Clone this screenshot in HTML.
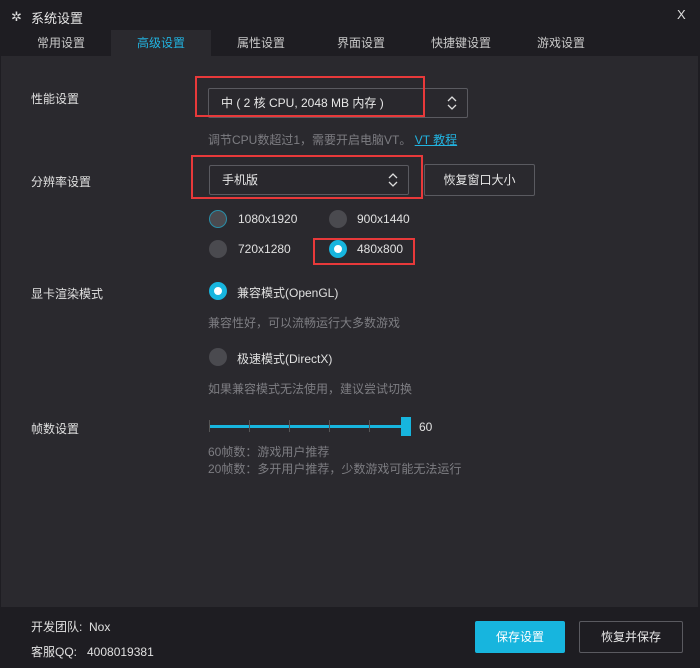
<!DOCTYPE html>
<html><head><meta charset="utf-8"><style>
*{margin:0;padding:0;box-sizing:border-box}
body{width:700px;height:668px;background:#1e1d22;font-family:"Liberation Sans","Noto Sans CJK SC",sans-serif;font-size:12px;color:#e0e0e0;position:relative;overflow:hidden}
.a{position:absolute;white-space:nowrap}
.panel{position:absolute;left:1px;top:56px;width:697px;height:551px;background:#2a292e}
.tab{position:absolute;top:30px;height:26px;line-height:26px;font-size:12px;color:#c8c8c8}
.sel{position:absolute;border:1px solid #5a5a60;border-radius:2px;background:#29282d;color:#e8e8e8;padding-left:12px}
.red{position:absolute;border:2px solid #e8393a}
.rad{position:absolute;width:18px;height:18px;border-radius:50%;background:#4a4a4f}
.on{background:#fff;border:5px solid #17b5de}
.gray{color:#7d7d82}
.arr{position:absolute;right:10px;top:50%;margin-top:-8px}
.btn{position:absolute;border:1px solid #5a5a60;border-radius:2px;text-align:center;color:#e8e8e8}
</style></head><body>
<div class="panel"></div>
<div class="a" style="left:11px;top:9px;font-size:13px;color:#ddd">✲</div>
<div class="a" style="left:31px;top:8px;font-size:13px;color:#e6e6e6">系统设置</div>
<div class="a" style="left:677px;top:7px;font-size:13px;color:#ddd">X</div>
<div class="tab" style="left:111px;width:100px;background:#2a292e"></div>
<div class="tab a" style="left:37px">常用设置</div>
<div class="tab a" style="left:137px;color:#22b3e0">高级设置</div>
<div class="tab a" style="left:237px">属性设置</div>
<div class="tab a" style="left:337px">界面设置</div>
<div class="tab a" style="left:431px">快捷键设置</div>
<div class="tab a" style="left:537px">游戏设置</div>

<div class="a" style="left:31px;top:90px">性能设置</div>
<div class="sel" style="left:208px;top:88px;width:260px;height:30px;line-height:28px">中 ( 2 核 CPU, 2048 MB 内存 )
<svg class="arr" width="10" height="16" viewBox="0 0 10 16"><path d="M1 6L5 2L9 6M1 10L5 14L9 10" fill="none" stroke="#ddd" stroke-width="1.3"/></svg></div>
<div class="red" style="left:195px;top:76px;width:230px;height:41px"></div>
<div class="a gray" style="left:208px;top:131px">调节CPU数超过1，需要开启电脑VT。 <span style="color:#22b3e0;text-decoration:underline">VT 教程</span></div>

<div class="a" style="left:31px;top:173px">分辨率设置</div>
<div class="sel" style="left:209px;top:165px;width:200px;height:30px;line-height:28px">手机版
<svg class="arr" width="10" height="16" viewBox="0 0 10 16"><path d="M1 6L5 2L9 6M1 10L5 14L9 10" fill="none" stroke="#ddd" stroke-width="1.3"/></svg></div>
<div class="red" style="left:191px;top:155px;width:232px;height:44px"></div>
<div class="btn" style="left:424px;top:164px;width:111px;height:32px;line-height:30px">恢复窗口大小</div>

<div class="rad" style="left:209px;top:210px;border:1px solid #2a8ea8"></div>
<div class="a" style="left:238px;top:212px">1080x1920</div>
<div class="rad" style="left:329px;top:210px"></div>
<div class="a" style="left:357px;top:212px">900x1440</div>
<div class="rad" style="left:209px;top:240px"></div>
<div class="a" style="left:238px;top:242px">720x1280</div>
<div class="rad on" style="left:329px;top:240px"></div>
<div class="a" style="left:357px;top:242px">480x800</div>
<div class="red" style="left:313px;top:238px;width:102px;height:27px"></div>

<div class="a" style="left:31px;top:285px">显卡渲染模式</div>
<div class="rad on" style="left:209px;top:282px"></div>
<div class="a" style="left:237px;top:284px">兼容模式(OpenGL)</div>
<div class="a gray" style="left:208px;top:314px">兼容性好，可以流畅运行大多数游戏</div>
<div class="rad" style="left:209px;top:348px"></div>
<div class="a" style="left:237px;top:350px">极速模式(DirectX)</div>
<div class="a gray" style="left:208px;top:380px">如果兼容模式无法使用，建议尝试切换</div>

<div class="a" style="left:31px;top:420px">帧数设置</div>
<div class="a" style="left:209px;top:425px;width:196px;height:3px;background:#17b5de"></div>
<div class="a" style="left:209px;top:420px;width:1px;height:12px;background:#555"></div>
<div class="a" style="left:249px;top:420px;width:1px;height:12px;background:#555"></div>
<div class="a" style="left:289px;top:420px;width:1px;height:12px;background:#555"></div>
<div class="a" style="left:329px;top:420px;width:1px;height:12px;background:#555"></div>
<div class="a" style="left:369px;top:420px;width:1px;height:12px;background:#555"></div>
<div class="a" style="left:401px;top:417px;width:10px;height:19px;background:#17b5de"></div>
<div class="a" style="left:419px;top:420px">60</div>
<div class="a gray" style="left:208px;top:443px">60帧数：游戏用户推荐</div>
<div class="a gray" style="left:208px;top:460px">20帧数：多开用户推荐，少数游戏可能无法运行</div>

<div class="a" style="left:31px;top:618px">开发团队:&nbsp;&nbsp;Nox</div>
<div class="a" style="left:31px;top:643px">客服QQ:&nbsp;&nbsp;&nbsp;4008019381</div>
<div class="btn" style="left:475px;top:621px;width:90px;height:32px;line-height:30px;background:#17b5de;border-color:#17b5de;color:#fff">保存设置</div>
<div class="btn" style="left:579px;top:621px;width:104px;height:32px;line-height:30px">恢复并保存</div>
</body></html>
